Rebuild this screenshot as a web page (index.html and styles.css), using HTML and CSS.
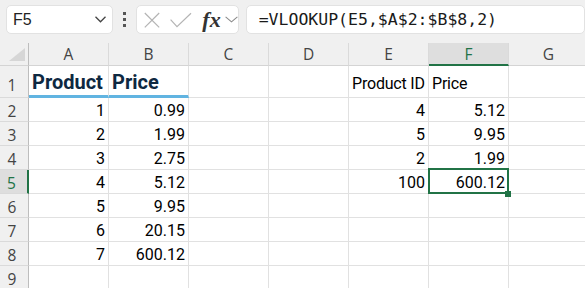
FILE: index.html
```html
<!DOCTYPE html>
<html lang="en">
<head>
    <meta charset="UTF-8">
    <title>VLOOKUP</title>
    <link rel="stylesheet" href="styles.css">
</head>
<body>
    <div class="toolbar">
        <div class="name-box">
            <span>F5</span>
            <svg class="chev" width="11" height="7" viewBox="0 0 11 7"><path d="M0.5 0.8 L5.5 5.8 L10.5 0.8" fill="none" stroke="#444" stroke-width="1.3"/></svg>
        </div>
        <div class="grip"><i></i><i></i><i></i></div>
        <div class="fn-box">
            <svg class="ico-x" width="16" height="16" viewBox="0 0 16 16"><path d="M0.8 1 L15.2 15.4 M15.2 1 L0.8 15.4" stroke="#b4b4b4" stroke-width="1.2"/></svg>
            <svg class="ico-ok" width="22" height="16" viewBox="0 0 22 16"><path d="M0.6 7.6 L7 14.6 L21 1.2" fill="none" stroke="#b4b4b4" stroke-width="1.2"/></svg>
            <span class="fx">fx</span>
            <svg class="chev-sm" width="13" height="7" viewBox="0 0 13 7"><path d="M0.6 0.8 L6.5 5.8 L12.4 0.8" fill="none" stroke="#8a8a8a" stroke-width="1.1"/></svg>
        </div>
        <div class="formula">=VLOOKUP(E5,$A$2:$B$8,2)</div>
    </div>

    <div class="sheet">
        <div class="corner"><svg width="28" height="22" viewBox="0 0 28 22"><polygon points="25,5 25,18 9,18" fill="#d6d6d6"/></svg></div>
        <div class="col-head">A</div>
        <div class="col-head">B</div>
        <div class="col-head">C</div>
        <div class="col-head">D</div>
        <div class="col-head">E</div>
        <div class="col-head sel">F</div>
        <div class="col-head">G</div>

        <div class="row-head first">1</div>
        <div class="cell title">Product</div>
        <div class="cell title">Price</div>
        <div class="cell first"></div>
        <div class="cell first"></div>
        <div class="cell first text">Product ID</div>
        <div class="cell first text">Price</div>
        <div class="cell first"></div>

        <div class="row-head">2</div>
        <div class="cell">1</div><div class="cell">0.99</div><div class="cell"></div><div class="cell"></div>
        <div class="cell">4</div><div class="cell">5.12</div><div class="cell"></div>

        <div class="row-head">3</div>
        <div class="cell">2</div><div class="cell">1.99</div><div class="cell"></div><div class="cell"></div>
        <div class="cell">5</div><div class="cell">9.95</div><div class="cell"></div>

        <div class="row-head">4</div>
        <div class="cell">3</div><div class="cell">2.75</div><div class="cell"></div><div class="cell"></div>
        <div class="cell">2</div><div class="cell">1.99</div><div class="cell"></div>

        <div class="row-head sel">5</div>
        <div class="cell">4</div><div class="cell">5.12</div><div class="cell"></div><div class="cell"></div>
        <div class="cell">100</div><div class="cell active">600.12</div><div class="cell"></div>

        <div class="row-head">6</div>
        <div class="cell">5</div><div class="cell">9.95</div><div class="cell"></div><div class="cell"></div>
        <div class="cell"></div><div class="cell"></div><div class="cell"></div>

        <div class="row-head">7</div>
        <div class="cell">6</div><div class="cell">20.15</div><div class="cell"></div><div class="cell"></div>
        <div class="cell"></div><div class="cell"></div><div class="cell"></div>

        <div class="row-head">8</div>
        <div class="cell">7</div><div class="cell">600.12</div><div class="cell"></div><div class="cell"></div>
        <div class="cell"></div><div class="cell"></div><div class="cell"></div>

        <div class="row-head">9</div>
        <div class="cell"></div><div class="cell"></div><div class="cell"></div><div class="cell"></div>
        <div class="cell"></div><div class="cell"></div><div class="cell"></div>
    </div>
</body>
</html>
```

FILE: styles.css
```css
body {
    margin: 0;
    background: #f0f0f0;
    overflow: hidden;
    font-family: Roboto, "Liberation Sans", sans-serif;
}
.toolbar {
    display: flex;
    align-items: flex-start;
    box-sizing: border-box;
    height: 43px;
    padding: 5px 0 0 6px;
    white-space: nowrap;
}
.name-box, .fn-box, .formula {
    box-sizing: border-box;
    height: 29px;
    background: #fff;
    border: 1px solid #e2e2e2;
    border-radius: 5px;
    display: flex;
    align-items: center;
}
.name-box {
    width: 124px;
    justify-content: space-between;
    padding: 0 6px 0 6px;
    font-family: "Liberation Sans", sans-serif;
    font-size: 16px;
    color: #222;
}
.grip {
    width: 28px;
    height: 29px;
    display: flex;
    flex-direction: column;
    align-items: center;
    justify-content: center;
    gap: 3px;
}
.grip i {
    display: block;
    width: 3px;
    height: 3px;
    background: #555;
}
.fn-box {
    width: 105px;
    padding-left: 7px;
}
.ico-ok {
    margin-left: 10px;
}
.fx {
    margin-left: 10px;
    font-family: "Liberation Serif", serif;
    font-style: italic;
    font-weight: bold;
    font-size: 22px;
    line-height: 22px;
    color: #333;
}
.chev-sm {
    margin-left: 4px;
}
.formula {
    width: 400px;
    margin-left: 7px;
    padding-left: 12px;
    font-family: "DejaVu Sans Mono", monospace;
    font-size: 16.5px;
    color: #1a1a1a;
}

.sheet {
    display: grid;
    grid-template-columns: 29px repeat(7, 80px);
    grid-template-rows: 23px 32px repeat(9, 24px);
}
.sheet > div {
    box-sizing: border-box;
    display: flex;
    line-height: 20px;
    white-space: nowrap;
}
.corner {
    background: #f0f0f0;
    border-right: 1px solid #bdbdbd;
    border-bottom: 1px solid #d4d4d4;
}
.col-head {
    align-items: center;
    justify-content: center;
    background: #f0f0f0;
    border-right: 1px solid #dadada;
    border-bottom: 1px solid #d4d4d4;
    font-family: "Open Sans", sans-serif;
    font-size: 15.5px;
    color: #444;
}
.col-head.sel {
    background: #dedede;
    border-bottom: 2px solid #217346;
    color: #217346;
}
.row-head {
    align-items: flex-end;
    justify-content: center;
    padding-right: 4px;
    background: #f0f0f0;
    border-right: 1px solid #bdbdbd;
    border-bottom: 1px solid #dadada;
    font-family: "Open Sans", sans-serif;
    font-size: 15.5px;
    color: #444;
}
.row-head.first {
    padding-bottom: 2px;
}
.row-head.sel {
    background: #dedede;
    border-right: 2px solid #217346;
    color: #217346;
}
.cell {
    align-items: flex-end;
    justify-content: flex-end;
    padding: 0 3px;
    background: #fff;
    border-right: 1px solid #e1e1e1;
    border-bottom: 1px solid #e1e1e1;
    font-size: 16px;
    color: #000;
}
.cell.first {
    padding-bottom: 3px;
}
.cell.text {
    justify-content: flex-start;
    letter-spacing: -0.2px;
}
.cell.title {
    justify-content: flex-start;
    padding-bottom: 1px;
    border-bottom: 3px solid #61b4e1;
    font-size: 20px;
    line-height: 24px;
    font-weight: bold;
    color: #0e2841;
}
.cell.active {
    position: relative;
}
.cell.active::before {
    content: "";
    position: absolute;
    top: -2px;
    left: -1px;
    right: -1px;
    bottom: -1px;
    border: 2px solid #217346;
}
.cell.active::after {
    content: "";
    position: absolute;
    right: -3px;
    bottom: -4px;
    width: 6px;
    height: 6px;
    background: #217346;
}
```
